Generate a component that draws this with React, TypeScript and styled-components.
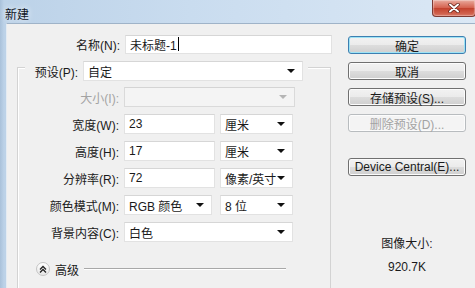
import React from "react";
import styled, { createGlobalStyle, css } from "styled-components";

const GlobalStyle = createGlobalStyle`
  html, body {
    margin: 0;
    padding: 0;
    background: #f0f0f0;
  }
  body {
    font-family: "Liberation Sans", "Noto Sans CJK SC", sans-serif;
    font-size: 12px;
    color: #1a1a1a;
  }
`;

const Window = styled.div`
  width: 475px;
  height: 288px;
  overflow: hidden;
  display: flex;
  flex-direction: column;
  background: linear-gradient(90deg, #a9c1da 0px, #bcd2e8 4px, #c9dcef 40%, #dbe8f5 100%);
`;

const TitleBar = styled.div`
  height: 23px;
  display: flex;
  justify-content: space-between;
  align-items: flex-start;
`;

const Title = styled.div`
  padding: 5px 0 0 5px;
  font-size: 12px;
  color: #10151f;
  text-shadow: 0 0 6px #ffffff;
`;

const CloseButton = styled.div`
  width: 42px;
  height: 16px;
  margin-right: -1px;
  display: flex;
  align-items: center;
  justify-content: center;
  border: 1px solid #7d3a33;
  border-top: none;
  border-radius: 0 0 4px 4px;
  background: linear-gradient(#e9a99c, #d4604d 50%, #c2412d 51%, #d7705c);
  box-shadow: inset 0 0 1px 1px rgba(255, 255, 255, 0.35);
`;

const Frame = styled.div`
  flex: 1;
  margin-left: 6px;
  display: flex;
  background: #f0f0f0;
  border-top: 1px solid #9fb3c8;
  border-left: 1px solid #e3ebf3;
`;

const LeftPanel = styled.div`
  width: 334px;
  display: flex;
  flex-direction: column;
`;

const RightPanel = styled.div`
  flex: 1;
  padding: 12px 0 0 7px;
  display: flex;
  flex-direction: column;
  align-items: flex-start;
`;

const Row = styled.div<{ $top?: number }>`
  display: flex;
  align-items: center;
  height: 20px;
  margin-top: ${(p) => p.$top ?? 7}px;
`;

const Label = styled.div<{ $width: number; $disabled?: boolean }>`
  width: ${(p) => p.$width}px;
  padding-right: 5px;
  box-sizing: border-box;
  text-align: right;
  white-space: nowrap;
  color: ${(p) => (p.$disabled ? "#a3a3a3" : "#1a1a1a")};
`;

const Field = styled.div<{ $width: number; $select?: boolean; $disabled?: boolean; $height?: number; $gap?: number }>`
  position: relative;
  width: ${(p) => p.$width}px;
  height: ${(p) => p.$height ?? 20}px;
  margin-left: ${(p) => p.$gap ?? 0}px;
  box-sizing: border-box;
  padding: 0 4px 0 4px;
  display: flex;
  align-items: center;
  white-space: nowrap;
  background: ${(p) => (p.$disabled ? "#f4f4f4" : "#ffffff")};
  border: 1px solid ${(p) => (p.$disabled ? "#dadada" : "#e2e2e2")};
  border-top-color: ${(p) => (p.$disabled ? "#d4d4d4" : "#d6d6d6")};
  ${(p) =>
    p.$select &&
    css`
      &::after {
        content: "";
        position: absolute;
        right: 7px;
        top: 50%;
        margin-top: -2px;
        border-left: 4px solid transparent;
        border-right: 4px solid transparent;
        border-top: 4px solid ${p.$disabled ? "#b5b5b5" : "#111111"};
      }
    `}
`;

const Caret = styled.span`
  display: inline-block;
  width: 1px;
  height: 14px;
  margin-left: 1px;
  background: #000;
`;

const Group = styled.div`
  flex: 1;
  margin: 13px 0 0 10px;
  width: 314px;
  box-sizing: border-box;
  border: 1px solid #d3d3d3;
  border-bottom: none;
  box-shadow: inset 1px 1px 0 #ffffff;
  display: flex;
  flex-direction: column;
`;

const Legend = styled.div`
  display: inline-flex;
  align-self: flex-start;
  align-items: center;
  height: 20px;
  margin: -7px 0 0 7px;
  padding-right: 5px;
  background: #f0f0f0;
`;

const Advanced = styled.div`
  display: flex;
  align-items: center;
  height: 16px;
  margin: 19px 44px 0 18px;
`;

const ToggleCircle = styled.div`
  width: 14px;
  height: 14px;
  border-radius: 50%;
  box-sizing: border-box;
  border: 1px solid #c4c4c4;
  background: linear-gradient(#ffffff, #e6e6e6);
  display: flex;
  align-items: center;
  justify-content: center;
`;

const AdvancedText = styled.span`
  margin-left: 5px;
`;

const Rule = styled.div`
  flex: 1;
  height: 1px;
  margin-left: 5px;
  background: #a8a8a8;
  border-bottom: 1px solid #ffffff;
`;

const Button = styled.div<{ $primary?: boolean; $disabled?: boolean; $top?: number }>`
  width: 118px;
  height: 18px;
  margin-top: ${(p) => p.$top ?? 8}px;
  box-sizing: border-box;
  display: flex;
  align-items: center;
  justify-content: center;
  border-radius: 3px;
  white-space: nowrap;
  border: 1px solid ${(p) => (p.$primary ? "#3c7fb1" : p.$disabled ? "#b8bcbf" : "#707070")};
  background: ${(p) =>
    p.$disabled ? "#f4f4f4" : "linear-gradient(#f2f2f2 0%, #ebebeb 50%, #dddddd 51%, #cfcfcf 100%)"};
  color: ${(p) => (p.$disabled ? "#a3a3a3" : "#1a1a1a")};
  box-shadow: ${(p) => (p.$primary ? "inset 0 0 0 1px #9ee3f5" : "inset 0 0 0 1px #fcfcfc")};
`;

const SizeInfo = styled.div`
  width: 118px;
  margin-top: 61px;
  text-align: center;
  line-height: 14px;
`;

const SizeValue = styled.div`
  margin-top: 9px;
`;

export default function App() {
  return (
    <>
      <GlobalStyle />
      <Window>
        <TitleBar>
          <Title>新建</Title>
          <CloseButton>
            <svg width="12" height="10" viewBox="0 0 12 10">
              <path d="M2 1.5 L10 8.5 M10 1.5 L2 8.5" stroke="#5a1a12" strokeWidth="3.4" strokeLinecap="round" />
              <path d="M2 1.5 L10 8.5 M10 1.5 L2 8.5" stroke="#ffffff" strokeWidth="2" strokeLinecap="round" />
            </svg>
          </CloseButton>
        </TitleBar>
        <Frame>
          <LeftPanel>
            <Row $top={10}>
              <Label $width={118}>名称(N):</Label>
              <Field $width={207} $height={19}>
                未标题-1<Caret />
              </Field>
            </Row>
            <Group>
              <Legend>
                <Label $width={58}>预设(P):</Label>
                <Field $width={220} $select>
                  自定
                </Field>
              </Legend>
              <Row $top={6}>
                <Label $width={106} $disabled>
                  大小(I):
                </Label>
                <Field $width={171} $select $disabled />
              </Row>
              <Row>
                <Label $width={106}>宽度(W):</Label>
                <Field $width={91}>23</Field>
                <Field $width={73} $select $gap={5}>
                  厘米
                </Field>
              </Row>
              <Row>
                <Label $width={106}>高度(H):</Label>
                <Field $width={91}>17</Field>
                <Field $width={73} $select $gap={5}>
                  厘米
                </Field>
              </Row>
              <Row>
                <Label $width={106}>分辨率(R):</Label>
                <Field $width={91}>72</Field>
                <Field $width={73} $select $gap={5}>
                  像素/英寸
                </Field>
              </Row>
              <Row>
                <Label $width={106}>颜色模式(M):</Label>
                <Field $width={88} $select>
                  RGB 颜色
                </Field>
                <Field $width={73} $select $gap={8}>
                  8 位
                </Field>
              </Row>
              <Row>
                <Label $width={106}>背景内容(C):</Label>
                <Field $width={169} $select>
                  白色
                </Field>
              </Row>
              <Advanced>
                <ToggleCircle>
                  <svg width="8" height="8" viewBox="0 0 8 8">
                    <path d="M1 4.5 L4 1.5 L7 4.5 M1 7.5 L4 4.5 L7 7.5" fill="none" stroke="#222" strokeWidth="1.3" />
                  </svg>
                </ToggleCircle>
                <AdvancedText>高级</AdvancedText>
                <Rule />
              </Advanced>
            </Group>
          </LeftPanel>
          <RightPanel>
            <Button $primary $top={0}>确定</Button>
            <Button>取消</Button>
            <Button>存储预设(S)...</Button>
            <Button $disabled>删除预设(D)...</Button>
            <Button $top={26}>Device Central(E)...</Button>
            <SizeInfo>
              图像大小:
              <SizeValue>920.7K</SizeValue>
            </SizeInfo>
          </RightPanel>
        </Frame>
      </Window>
    </>
  );
}
